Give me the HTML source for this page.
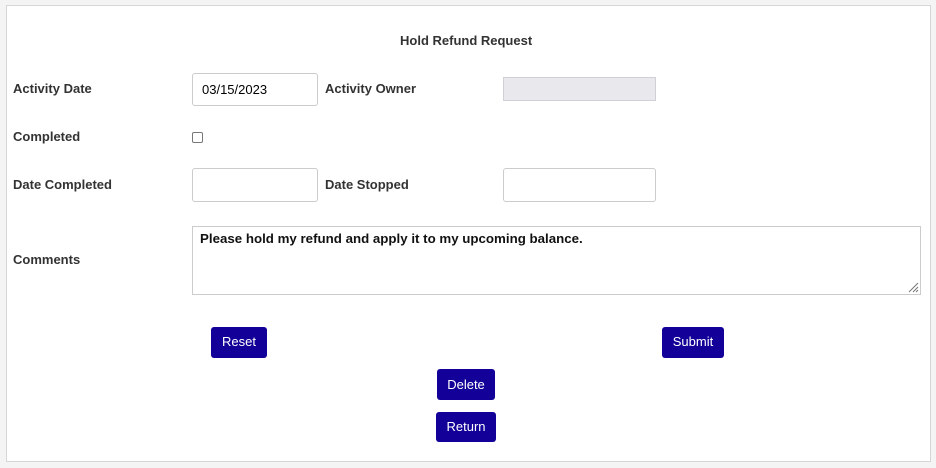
<!DOCTYPE html>
<html><head><style>
body{margin:0;width:936px;height:468px;background:#f4f4f4;font-family:"Liberation Sans",Arial,sans-serif;position:relative;overflow:hidden}
.p{position:absolute;left:6px;top:5px;width:923px;height:455px;background:#fff;border:1px solid #d6d6d6}
.a{position:absolute}
.l{font-size:13px;font-weight:bold;color:#333}
.in{position:absolute;border:1px solid #ccc;border-radius:3px;background:#fff;box-sizing:border-box;font-size:13px;color:#000}
.b{position:absolute;background:#130098;color:#fff;font-size:13px;border-radius:3px;text-align:center;box-sizing:border-box}
</style></head><body>
<div class="p"></div>
<div class="a l" style="left:400px;top:33px;font-size:13px">Hold Refund Request</div>
<div class="a l" style="left:13px;top:81px">Activity Date</div>
<div class="in" style="left:192px;top:73px;width:126px;height:33px;padding:8px 0 0 9px">03/15/2023</div>
<div class="a l" style="left:325px;top:81px">Activity Owner</div>
<div class="a" style="left:503px;top:77px;width:153px;height:24px;background:#e8e8ed;border:1px solid #d0d0d6;box-sizing:border-box"></div>
<div class="a l" style="left:13px;top:129px">Completed</div>
<div class="a" style="left:192px;top:132px;width:11px;height:11px;border:1px solid #777;border-radius:2px;box-sizing:border-box"></div>
<div class="a l" style="left:13px;top:177px">Date Completed</div>
<div class="in" style="left:192px;top:168px;width:126px;height:34px"></div>
<div class="a l" style="left:325px;top:177px">Date Stopped</div>
<div class="in" style="left:503px;top:168px;width:153px;height:34px"></div>
<div class="a l" style="left:13px;top:252px">Comments</div>
<div class="in" style="left:192px;top:226px;width:729px;height:69px;border-radius:0;padding:4px 0 0 7px;font-weight:bold;color:#111;font-size:13.3px">Please hold my refund and apply it to my upcoming balance.
<svg style="position:absolute;right:1px;bottom:1px" width="12" height="12"><path d="M11 2L2 11M11 6L6 11M11 9L9 11" stroke="#777" stroke-width="1"/></svg></div>
<div class="b" style="left:211px;top:327px;width:56px;height:31px;padding-top:7px">Reset</div>
<div class="b" style="left:662px;top:327px;width:62px;height:31px;padding-top:7px">Submit</div>
<div class="b" style="left:437px;top:369px;width:58px;height:31px;padding-top:8px">Delete</div>
<div class="b" style="left:436px;top:412px;width:60px;height:30px;padding-top:7px">Return</div>
</body></html>
